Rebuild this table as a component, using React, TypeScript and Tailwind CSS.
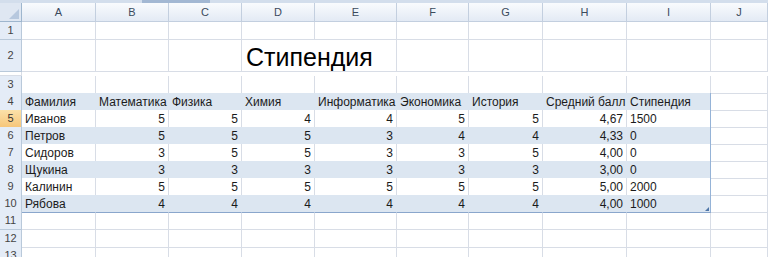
import React from "react";

const letters = ["A", "B", "C", "D", "E", "F", "G", "H", "I", "J"];

const tableRows: string[][] = [
    ["Фамилия", "Математика", "Физика", "Химия", "Информатика", "Экономика", "История", "Средний балл", "Стипендия"],
    ["Иванов", "5", "5", "4", "4", "5", "5", "4,67", "1500"],
    ["Петров", "5", "5", "5", "3", "4", "4", "4,33", "0"],
    ["Сидоров", "3", "5", "5", "3", "3", "5", "4,00", "0"],
    ["Щукина", "3", "3", "3", "3", "3", "3", "3,00", "0"],
    ["Калинин", "5", "5", "5", "5", "5", "5", "5,00", "2000"],
    ["Рябова", "4", "4", "4", "4", "4", "4", "4,00", "1000"],
];

const gridCols = "grid grid-cols-[22px_74px_73px_73px_73px_82px_72px_74px_84px_84px_57px]";

function RowHeader({ n, active }: { n: number; active?: boolean }) {
    return (
        <div
            className={
                active
                    ? "flex items-center justify-center border-r border-b border-[#b9c9da] bg-gradient-to-b from-[#fbe1a9] to-[#f6c67a] text-[11px] text-[#333]"
                    : "flex items-center justify-center border-r border-b border-[#b9c9da] bg-[#e4ecf7] text-[11px] text-[#444]"
            }
        >
            {n}
        </div>
    );
}

function EmptyRow({ n, height }: { n: number; height: string }) {
    return (
        <div className={`${gridCols} ${height}`}>
            <RowHeader n={n} />
            {letters.map(l => (
                <div key={l} className="border-r border-b border-[#d8dde6]" />
            ))}
        </div>
    );
}

export default function App() {
    return (
        <div className="w-[768px] h-[257px] overflow-hidden bg-white font-['Liberation_Sans',Arial,sans-serif] text-[12px] text-[#1b1b1b]">
            {/* window strip */}
            <div className="h-[3px] bg-[#d3deec] flex">
                <div className="ml-[142px] w-[68px] bg-[#a3b8d3]" />
            </div>

            {/* column headers */}
            <div className={`${gridCols} h-[19px]`}>
                <div className="relative border-r border-b border-[#9eb6ce] bg-[#dfe7f2]">
                    <svg className="absolute right-[2px] bottom-[2px]" width="10" height="10" viewBox="0 0 10 10">
                        <polygon points="10,0 10,10 0,10" fill="#b7c8de" />
                    </svg>
                </div>
                {letters.map(l => (
                    <div
                        key={l}
                        className="flex items-center justify-center border-r border-b border-[#c3cfdf] bg-gradient-to-b from-[#f9fbfd] to-[#e3eaf4] text-[11px] text-[#3b4a5c]"
                    >
                        {l}
                    </div>
                ))}
            </div>

            <EmptyRow n={1} height="h-[18px]" />

            {/* title row */}
            <div className={`${gridCols} h-[36px]`}>
                <RowHeader n={2} />
                <div className="border-r border-b border-[#d8dde6]" />
                <div className="border-r border-b border-[#d8dde6]" />
                <div className="border-r border-b border-[#d8dde6]" />
                <div className="relative z-10 flex items-end border-b border-[#d8dde6] pl-[4px]">
                    <span className="whitespace-nowrap text-[25px] leading-[27px] text-black">Стипендия</span>
                </div>
                <div className="border-r border-b border-[#d8dde6]" />
                <div className="border-r border-b border-[#d8dde6]" />
                <div className="border-r border-b border-[#d8dde6]" />
                <div className="border-r border-b border-[#d8dde6]" />
                <div className="border-r border-b border-[#d8dde6]" />
                <div className="border-r border-b border-[#d8dde6]" />
                <div className="border-r border-b border-[#d8dde6]" />
            </div>

            {/* row 3, bottom edge is top of the table */}
            <div className={`${gridCols} h-[17px]`}>
                <RowHeader n={3} />
                {letters.map(l => (
                    <div
                        key={l}
                        className={l === "J" ? "border-r border-b border-[#d8dde6]" : "border-r border-b border-r-[#d8dde6] border-b-[#95b3d7]"}
                    />
                ))}
            </div>

            {/* table rows 4-10 */}
            {tableRows.map((row, ri) => {
                const banded = ri % 2 === 0;
                const last = ri === tableRows.length - 1;
                return (
                    <div key={ri} className={`${gridCols} h-[17px]`}>
                        <RowHeader n={ri + 4} active={ri === 1} />
                        {row.map((val, ci) => {
                            const numeric = ri > 0 && ci > 0 && ci < 8;
                            const lastCol = ci === 8;
                            return (
                                <div
                                    key={ci}
                                    className={[
                                        "relative flex items-end leading-[15px] whitespace-nowrap px-[3px] border-r border-b",
                                        numeric ? "justify-end" : "justify-start",
                                        banded ? "bg-[#dce6f1]" : "bg-white",
                                        lastCol ? "border-r-[#95b3d7]" : banded ? "border-r-[#dce6f1]" : "border-r-[#d8dde6]",
                                        last ? "border-b-[#8aa6cc]" : "border-b-[#a7bedc]",
                                    ].join(" ")}
                                >
                                    {val}
                                    {last && lastCol && (
                                        <svg className="absolute right-[1px] bottom-[1px]" width="4" height="4" viewBox="0 0 4 4">
                                            <polygon points="4,0 4,4 0,4" fill="#4f76a8" />
                                        </svg>
                                    )}
                                </div>
                            );
                        })}
                        <div className="border-r border-b border-[#d8dde6]" />
                    </div>
                );
            })}

            <EmptyRow n={11} height="h-[18px]" />
            <EmptyRow n={12} height="h-[17px]" />
            <EmptyRow n={13} height="h-[17px]" />
        </div>
    );
}
